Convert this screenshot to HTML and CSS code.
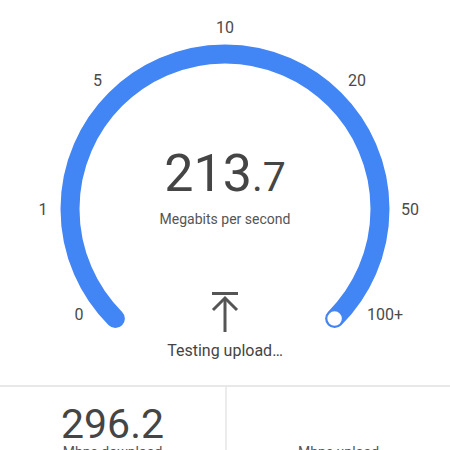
FILE: index.html
```html
<!DOCTYPE html>
<html lang="en">
<head>
    <meta charset="UTF-8">
    <meta name="viewport" content="width=device-width, initial-scale=1.0">
    <title>Speed Test</title>
    <link rel="stylesheet" href="styles.css">
</head>
<body>

<main class="tester">
    <section class="gauge">
        <svg class="dial" width="450" height="385" viewBox="0 0 450 385">
            <path class="dial-arc" d="M115.4 318.6 A155 155 0 1 1 334.6 318.6"/>
            <circle class="dial-handle" cx="334.6" cy="318.6" r="8"/>
            <text class="dial-label" x="79" y="320">0</text>
            <text class="dial-label" x="43" y="215">1</text>
            <text class="dial-label" x="97.5" y="86">5</text>
            <text class="dial-label" x="225" y="33">10</text>
            <text class="dial-label" x="357" y="86">20</text>
            <text class="dial-label" x="410" y="215">50</text>
            <text class="dial-label" x="385" y="320">100+</text>
        </svg>

        <div class="readout">
            <div class="speed">213<span class="speed-dec">.7</span></div>
            <div class="unit">Megabits per second</div>
        </div>

        <div class="status">
            <svg class="status-icon" width="28" height="40" viewBox="0 0 28 40">
                <line x1="1" y1="1.5" x2="27" y2="1.5"/>
                <line x1="14" y1="6" x2="14" y2="40"/>
                <polyline points="2,18 14,6 26,18"/>
            </svg>
            <div class="status-text">Testing upload…</div>
        </div>
    </section>

    <section class="results">
        <div class="result">
            <div class="result-value">296.2</div>
            <div class="result-label">Mbps download</div>
        </div>
        <div class="result">
            <div class="result-value"></div>
            <div class="result-label">Mbps upload</div>
        </div>
    </section>
</main>

</body>
</html>
```

FILE: styles.css
```css
body {
    font-family: Roboto, "Liberation Sans", sans-serif;
    margin: 0;
    padding: 0;
    background-color: #fff;
    color: #444;
    overflow: hidden;
}
.tester {
    width: 450px;
}
.gauge {
    position: relative;
    height: 385px;
}
.dial {
    display: block;
}
.dial-arc {
    fill: none;
    stroke: #4285f4;
    stroke-width: 19;
    stroke-linecap: round;
}
.dial-handle {
    fill: #fff;
    stroke: #4285f4;
    stroke-width: 1.5;
}
.dial-label {
    font-family: Roboto, sans-serif;
    font-size: 16px;
    fill: #4a4a4a;
    text-anchor: middle;
}
.readout {
    position: absolute;
    top: 147px;
    left: 0;
    right: 0;
    text-align: center;
}
.speed {
    font-size: 52px;
    line-height: 53px;
    color: #454545;
}
.speed-dec {
    font-size: 41px;
}
.unit {
    margin-top: 7px;
    font-size: 14px;
    line-height: 16px;
    color: #555;
}
.status {
    position: absolute;
    top: 292px;
    left: 0;
    right: 0;
    display: flex;
    flex-direction: column;
    align-items: center;
}
.status-icon {
    display: block;
    fill: none;
    stroke: #555;
    stroke-width: 3;
}
.status-text {
    margin-top: 9px;
    font-size: 16px;
    line-height: 19px;
    color: #444;
}
.results {
    display: grid;
    grid-template-columns: 1fr 1fr;
    border-top: 2px solid #e8e8e8;
}
.result {
    padding-top: 19px;
    text-align: center;
}
.result + .result {
    border-left: 2px solid #ececec;
}
.result-value {
    font-size: 41px;
    line-height: 36px;
    min-height: 36px;
    color: #454545;
}
.result-label {
    margin-top: 2px;
    font-size: 14px;
    line-height: 16px;
    color: #555;
}
```
